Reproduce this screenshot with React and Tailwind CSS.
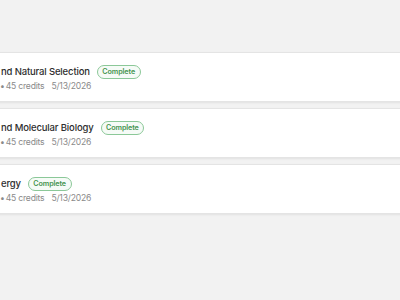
import React from "react";

const items = [
  { title: "nd Natural Selection" },
  { title: "nd Molecular Biology" },
  { title: "ergy" },
];

export default function App() {
  return (
    <div
      className="w-[400px] h-[300px] overflow-hidden bg-[#f2f2f2]"
      style={{ fontFamily: "Inter, 'Liberation Sans', sans-serif" }}
    >
      <div className="pt-[52px] flex flex-col gap-[6px] -ml-[12px] -mr-[12px]">
        {items.map((it, i) => (
          <div
            key={i}
            className="h-[50px] bg-white border border-[#e4e4e4] shadow-[0_1px_2px_rgba(0,0,0,0.07)] pl-[12px] pt-[12px] flex flex-col"
          >
            <div className="flex items-center gap-[7px] h-[14px]">
              <span className="text-[9.5px] leading-[14px] font-medium tracking-[-0.15px] text-[#2e2e2e] whitespace-nowrap">
                {it.title}
              </span>
              <span className="inline-flex items-center h-[14px] px-[4.5px] rounded-full border border-[#8bc898] bg-[#f6fbf7] text-[7.2px] font-semibold tracking-[-0.1px] text-[#45944f] leading-none">
                Complete
              </span>
            </div>
            <div className="flex items-center h-[14px] text-[8.6px] leading-[14px] tracking-[-0.2px] text-[#8a8a8a] whitespace-nowrap">
              <span className="-ml-[1px] mr-[1px]">•</span>
              <span>45 credits</span>
              <span className="ml-[7px]">5/13/2026</span>
            </div>
          </div>
        ))}
      </div>
    </div>
  );
}
